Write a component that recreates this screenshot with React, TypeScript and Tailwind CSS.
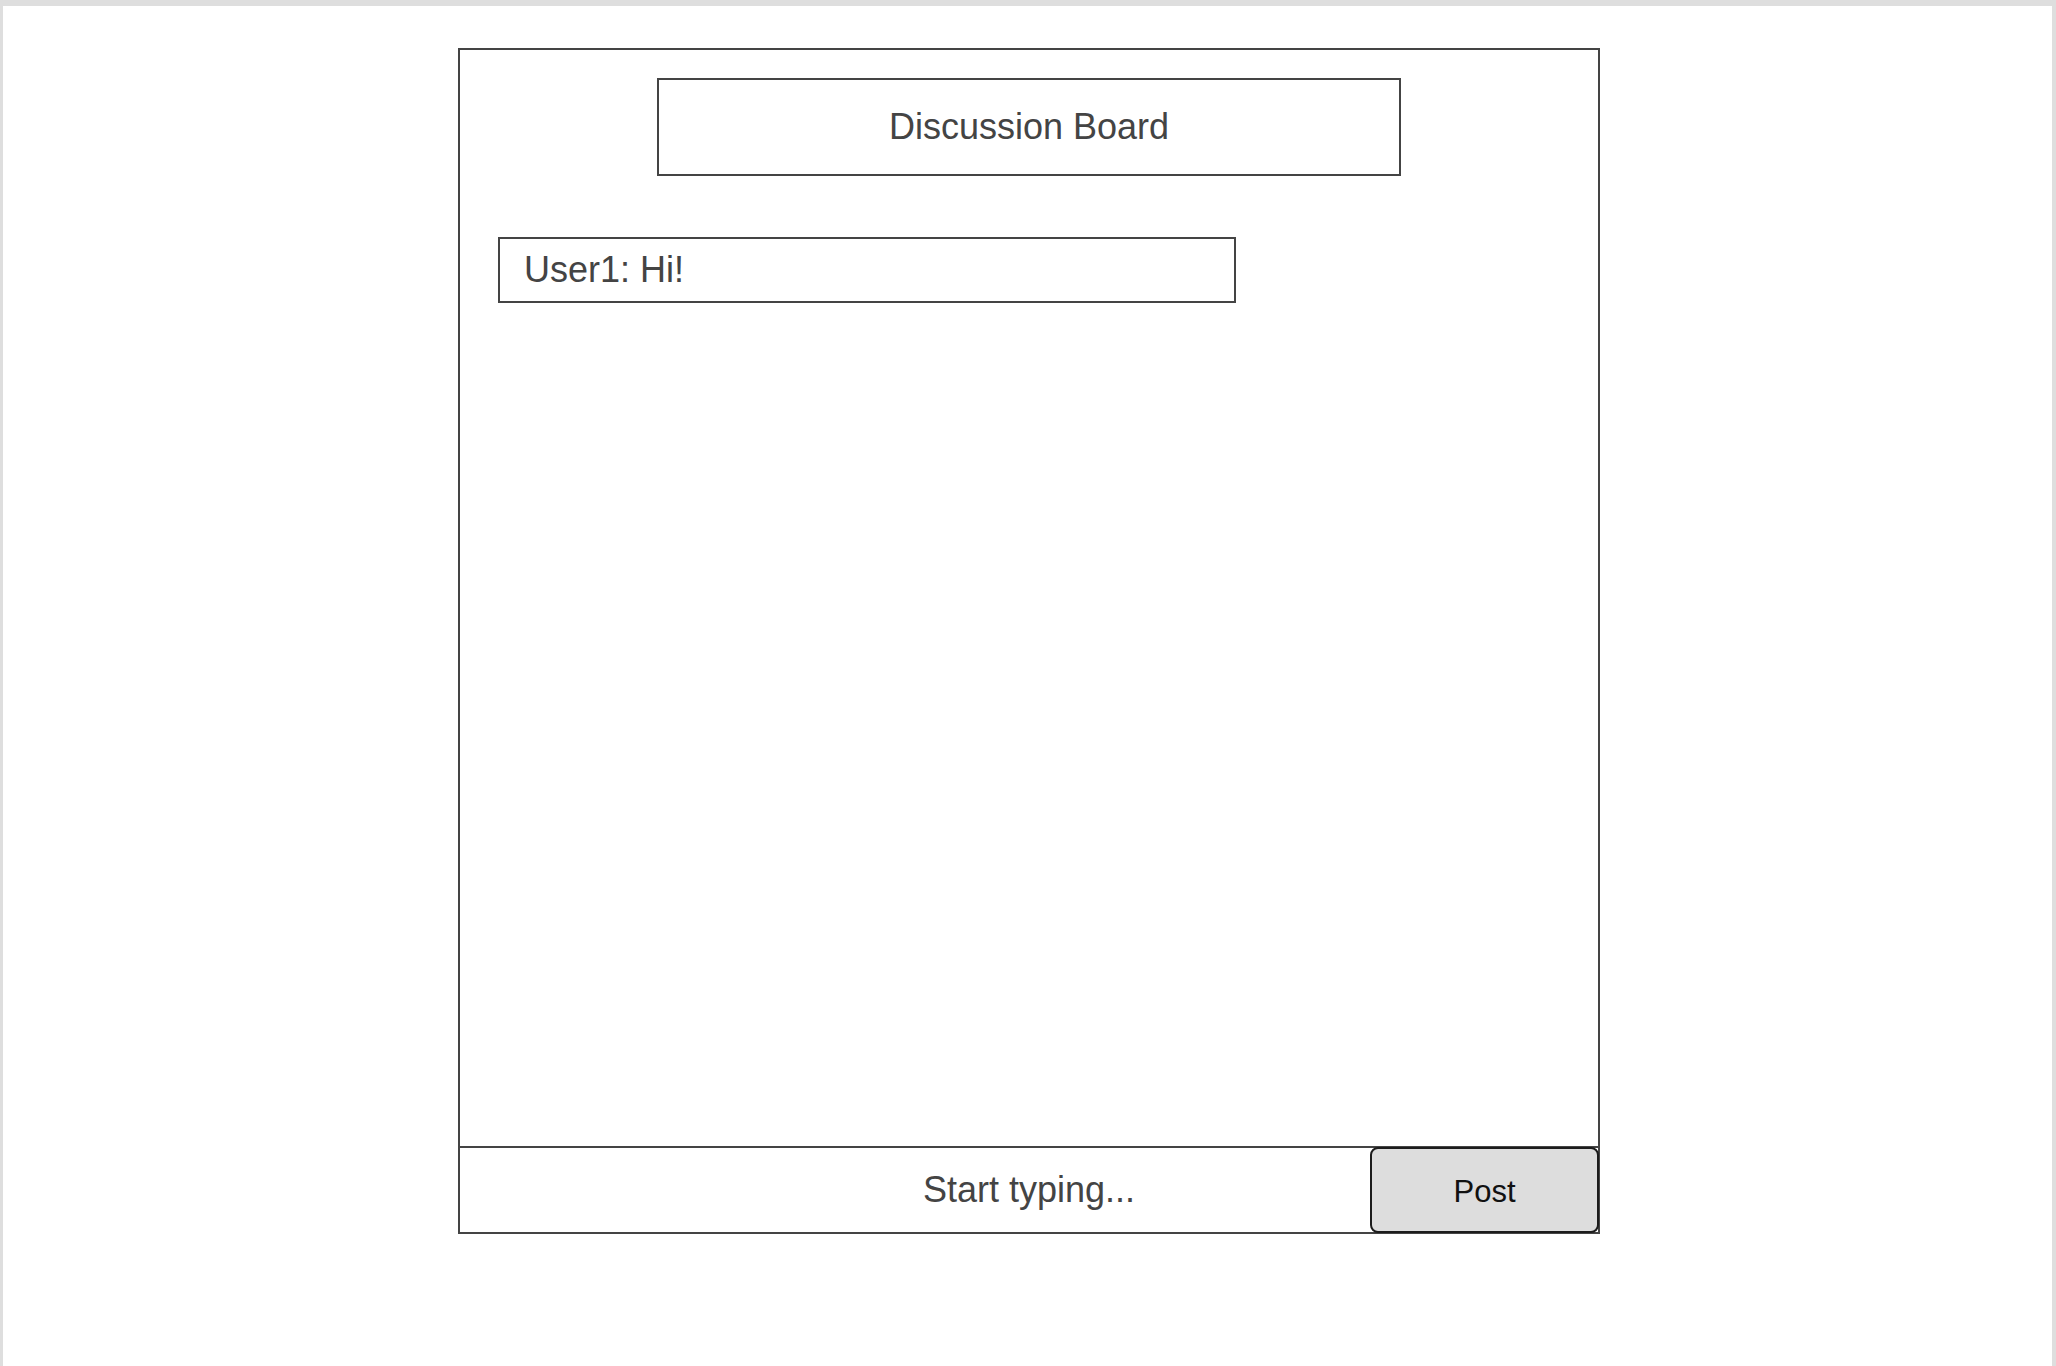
import React from "react";

const messages = [{ user: "User1", text: "Hi!" }];

export default function App() {
  return (
    <div
      className="min-h-[1366px] w-full bg-white border-t-[6px] border-l-[3px] border-r-[4px] border-[#dedede]"
      style={{ fontFamily: '"Liberation Sans", Arial, sans-serif' }}
    >
      <div className="ml-[455px] mt-[42px] flex h-[1186px] w-[1142px] flex-col border-2 border-[#444]">
        <div className="mx-auto mt-[28px] flex h-[98px] w-[744px] items-center justify-center border-2 border-[#444]">
          <span className="text-[36px] leading-none text-[#444]">Discussion Board</span>
        </div>

        <div className="ml-[38px] mt-[61px] flex flex-col gap-3">
          {messages.map((m, key) => (
            <div key={key} className="flex h-[66px] w-[738px] items-center border-2 border-[#444] pl-[24px]">
              <span className="text-[36px] leading-none text-[#444]">
                {m.user}: {m.text}
              </span>
            </div>
          ))}
        </div>

        <div className="flex-1" />

        <div className="relative flex h-[86px] items-center justify-center border-t-2 border-[#444]">
          <span className="text-[36px] leading-none text-[#444]">Start typing...</span>
          <button className="absolute top-[-1px] bottom-[-1px] right-[-1px] flex w-[229px] items-center justify-center rounded-[8px] border-2 border-[#1c1c1c] bg-[#dddddd] pt-[3px]">
            <span className="text-[31px] leading-none text-[#111]">Post</span>
          </button>
        </div>
      </div>
    </div>
  );
}
